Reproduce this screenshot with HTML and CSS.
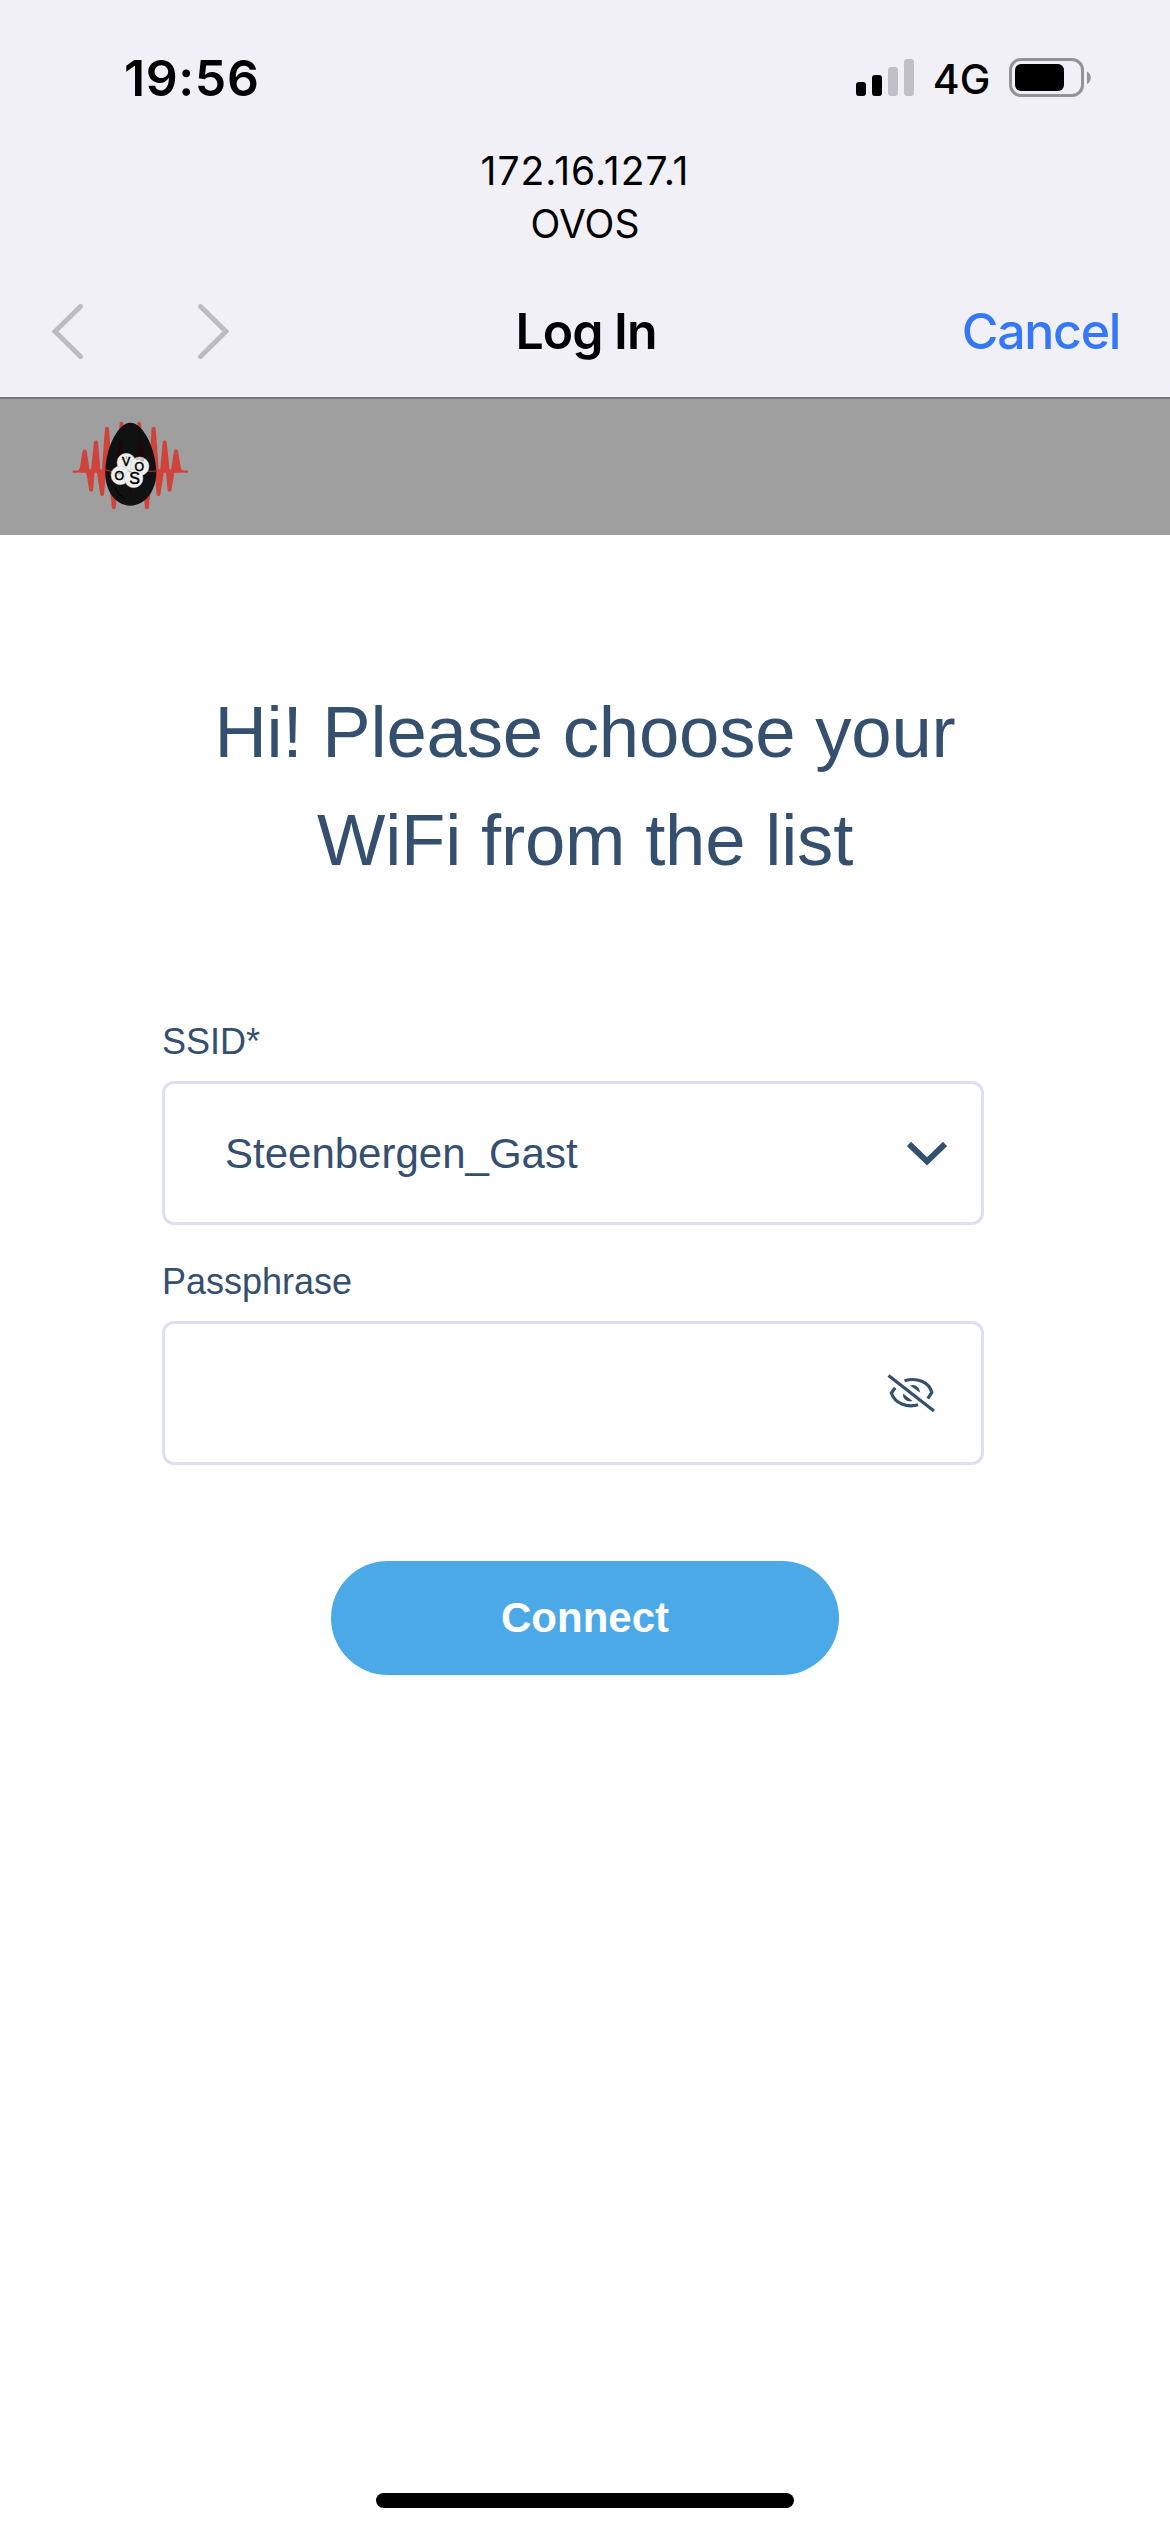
FILE: index.html
```html
<!DOCTYPE html>
<html lang="en">
<head>
<meta charset="utf-8">
<title>Log In</title>
<link rel="stylesheet" href="styles.css">
</head>
<body>
<div class="screen">
  <header class="chrome">
    <div class="status">
      <span class="time">19:56</span>
      <div class="indicators">
        <svg class="signal" width="58" height="38" viewBox="0 0 58 38">
          <rect x="0" y="23" width="10" height="14" rx="3"/>
          <rect x="16" y="16" width="10" height="21" rx="3"/>
          <rect class="off" x="32" y="8" width="10" height="29" rx="3"/>
          <rect class="off" x="48" y="0" width="10" height="37" rx="3"/>
        </svg>
        <span class="network">4G</span>
        <svg class="battery" width="83" height="40" viewBox="0 0 83 40">
          <rect class="case" x="1.5" y="1.5" width="72" height="36" rx="10.5"/>
          <rect x="6" y="6" width="49" height="27" rx="6"/>
          <path class="cap" d="M78 13.500c5 2.200 5 10.300 0 12.500z"/>
        </svg>
      </div>
    </div>
    <div class="host"><span class="address">172.16.127.1</span><span class="name">OVOS</span></div>
    <nav class="nav">
      <div class="arrows">
        <svg width="32" height="56" viewBox="0 0 32 56"><path d="M28.500 3.500 3 28.500 28.500 53.500"/></svg>
        <svg width="32" height="56" viewBox="0 0 32 56"><path d="M3.500 3.500 29 28.500 3.500 53.500"/></svg>
      </div>
      <span class="title">Log In</span>
      <span class="cancel">Cancel</span>
    </nav>
  </header>
  <div class="brand">
    <svg class="logo" width="117" height="90" viewBox="35 94 351 270">
      <path class="wavebase" d="M40 246H50Q57 246 60 240M380 246H370Q363 246 360 240"/>
      <path class="wave" d="M56 249 67 183Q73 174 79 183L89 249zM91 249 101 156Q107 147 113 156L121 249zM124 249 134 115Q140 107 146 115L155 249zM165 249 178 100Q183 92 189 100L199 249z"/>
      <path class="wave" d="M364 249 353 183Q347 174 341 183L331 249zM329 249 319 156Q313 147 307 156L299 249zM296 249 286 115Q280 107 274 115L265 249zM255 249 242 100Q237 92 231 100L221 249z"/>
      <path class="wave" d="M76 239 87 303Q92 309 98 303L104 239zM108 239 120 316Q125 322 131 316L138 239zM142 239 155 356Q160 362 166 356L177 239zM344 239 333 303Q328 309 322 303L316 239zM312 239 300 316Q295 322 289 316L282 239zM278 239 265 356Q260 362 254 356L243 239z"/>
      <path class="egg" d="M210 99C247 99 284 170 288 242C290 300 257 348 210 348C164 348 132 300 135 242C138 170 174 99 210 99z"/>
      <path class="tint" d="M180 140 198 240 187 290 164 244zM240 140 263 244 236 290 221 242zM207 275H213L210 335z"/>
      <path class="crack" d="M135 240 152 245H268L288 244"/>
      <path class="scuff" d="M163 292 176 314 193 327"/>
      <g class="berries"><circle cx="198" cy="219" r="28"/><circle cx="238" cy="230" r="28"/><circle cx="180" cy="257" r="28"/><circle cx="220" cy="266" r="28"/></g>
      <g class="speck"><path d="M198 199v9M184 210l5-2M227 208h25M241 213h10M171 252h14M205 246h8"/></g>
      <g class="letters"><text x="197" y="230">V</text><text x="237" y="243">O</text><text x="177" y="271">O</text><text class="big" x="223" y="283">S</text></g>
    </svg>
  </div>
  <main class="content">
    <h1 class="heading"><span class="line1">Hi! Please choose your</span><br><span class="line2">WiFi from the list</span></h1>
    <form class="form">
      <div class="label ssid">SSID*</div>
      <div class="field">
        <span class="value">Steenbergen_Gast</span>
        <svg class="chevron" width="40" height="25" viewBox="0 0 40 25"><path d="M2 3 20 20.300 38 3"/></svg>
      </div>
      <div class="label pass">Passphrase</div>
      <div class="field secret">
        <svg class="eye" width="50" height="42" viewBox="886 1372 50 42">
          <path d="M888.500 1375.500 934 1411"/>
          <path d="M904.500 1380.800C917 1377 929 1382 931.800 1392.500L927.800 1398.700"/>
          <path d="M895.200 1387.700 891.300 1393C895 1403.500 907 1408 918 1404.800"/>
          <path class="pupil" d="M910 1385.500C914 1383.500 920 1386.500 920 1392.500zM903 1393.500C902.500 1399 907 1402.500 912.500 1401z"/>
        </svg>
      </div>
      <button class="connect" type="button"><span>Connect</span></button>
    </form>
  </main>
  <div class="home"></div>
</div>
</body>
</html>
```

FILE: styles.css
```css
* { box-sizing: border-box; }
body { margin: 0; background: #fff; }
.screen { width: 1170px; height: 2532px; display: flex; flex-direction: column; background: #fff; font-family: "Liberation Sans", Arial, sans-serif; color: #34506e; overflow: hidden; }
svg { display: block; flex: none; }
span { white-space: nowrap; }

.chrome { height: 399px; background: #f1f0f6; border-bottom: 2px solid #77777a; color: #000; font-family: Inter, sans-serif; display: flex; flex-direction: column; }
.status { height: 144px; padding: 12px 78px 0 124px; display: flex; align-items: center; justify-content: space-between; }
.time { font-size: 50px; font-weight: 600; line-height: 60px; letter-spacing: 0.6px; }
.indicators { display: flex; align-items: center; }
.signal .off { fill: #c1c0c6; }
.network { width: 95px; text-align: center; font-size: 41px; font-weight: 450; line-height: 48px; margin-top: 2px; }
.battery .case { fill: none; stroke: #949397; stroke-width: 3; }
.battery .cap { fill: #949397; }
.host { height: 106px; display: flex; flex-direction: column; align-items: center; font-size: 39px; line-height: 53px; }
.address { letter-spacing: 1px; }
.nav { height: 147px; padding: 15px 50px 0 52px; display: grid; grid-template-columns: 1fr auto 1fr; align-items: center; font-size: 50px; line-height: 60px; }
.arrows { display: flex; gap: 113px; }
.arrows path { fill: none; stroke: #bdbdbf; stroke-width: 5; stroke-linecap: round; stroke-linejoin: miter; }
.title { font-weight: 600; letter-spacing: -1px; }
.cancel { justify-self: end; color: #3478f6; font-weight: 550; letter-spacing: -1.3px; }

.brand { height: 136px; background: #9f9f9f; padding: 22px 0 0 72px; }
.wave { fill: #d0433c; }
.wavebase { fill: none; stroke: #d0433c; stroke-width: 7; stroke-linecap: round; }
.egg { fill: #101112; }
.tint { fill: #1d0709; }
.crack { fill: none; stroke: #b73a35; stroke-width: 3; }
.scuff { fill: none; stroke: #000; stroke-width: 3; }
.berries { fill: #f0f0f0; stroke: #c9c9c9; stroke-width: 1.5; }
.speck { stroke: #777; stroke-width: 2; fill: none; }
.letters { font-size: 37px; text-anchor: middle; fill: #000; stroke: #000; stroke-width: 1.5; }
.letters .big { font-size: 48px; }

.content { flex: 1; padding-top: 143px; }
.heading { margin: 0; height: 216px; text-align: center; font-size: 72.5px; line-height: 108px; font-weight: 400; letter-spacing: -0.2px; }
.form { width: 822px; margin: 121px 0 0 162px; display: flex; flex-direction: column; }
.label { font-size: 36px; line-height: 54px; height: 66px; }
.field { height: 144px; border: 3px solid #dde0f0; border-radius: 12px; padding: 0 34px 0 60px; display: flex; align-items: center; justify-content: space-between; background: #fff; }
.value { font-size: 42px; line-height: 60px; padding-top: 2px; }
.pass { margin-top: 30px; }
.chevron path { fill: none; stroke: #34506e; stroke-width: 6; }
.secret { justify-content: flex-end; padding-right: 45px; }
.eye path { fill: none; stroke: #34506e; stroke-width: 3.200; }
.eye .pupil { fill: #34506e; stroke: none; }
.connect { width: 508px; height: 114px; margin: 96px 0 0 169px; padding: 0; border: 0; border-radius: 57px; background: #4ca9e8; color: #fff; font: bold 42px/60px "Liberation Sans", Arial, sans-serif; }
.home { width: 418px; height: 15px; border-radius: 8px; background: #000; margin: 0 auto 24px; }
```
